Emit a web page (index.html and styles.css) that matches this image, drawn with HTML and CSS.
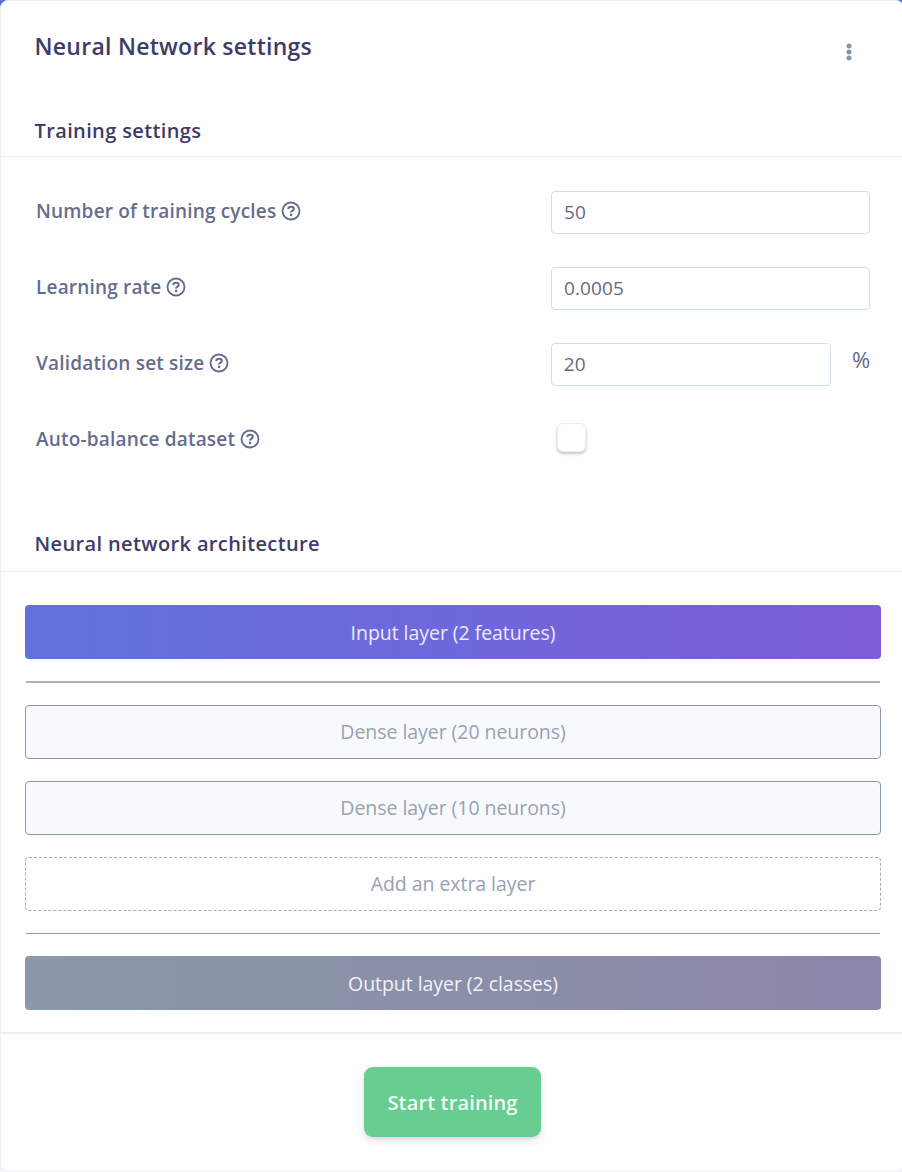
FILE: index.html
```html
<!DOCTYPE html>
<html lang="en">
<head>
<meta charset="utf-8">
<title>Neural Network settings</title>
<link rel="stylesheet" href="styles.css">
</head>
<body>
<svg class="defs" aria-hidden="true">
  <symbol id="help" viewBox="0 0 20 20">
    <circle cx="10" cy="10" r="8.5" fill="none" stroke="currentColor" stroke-width="1.8"/>
    <path d="M7.1 8C7.4 6.3 8.5 5.8 10 5.8C11.7 5.8 12.8 6.6 12.8 7.8C12.8 9.6 10.1 9.6 10.1 11.4" fill="none" stroke="currentColor" stroke-width="2.1"/>
    <circle cx="10.1" cy="13.9" r="1.3" fill="currentColor"/>
  </symbol>
</svg>
<main class="card">
  <header class="card-header">
    <h1 class="title">Neural Network settings</h1>
    <svg class="menu" viewBox="0 0 6 18"><circle cx="3" cy="3" r="2.5"/><circle cx="3" cy="9" r="2.5"/><circle cx="3" cy="15" r="2.5"/></svg>
  </header>
  <h2 class="section-title training">Training settings</h2>
  <section class="form">
    <div class="row"><label class="label"><span>Number of training cycles</span><svg class="help"><use href="#help"/></svg></label><div class="field">50</div></div>
    <div class="row"><label class="label"><span>Learning rate</span><svg class="help"><use href="#help"/></svg></label><div class="field">0.0005</div></div>
    <div class="row"><label class="label"><span>Validation set size</span><svg class="help"><use href="#help"/></svg></label><div class="field short">20</div><span class="unit">%</span></div>
    <div class="row"><label class="label"><span>Auto-balance dataset</span><svg class="help"><use href="#help"/></svg></label><div class="checkbox"></div></div>
  </section>
  <h2 class="section-title architecture">Neural network architecture</h2>
  <section class="layers">
    <div class="layer input"><span>Input layer (2 features)</span></div>
    <div class="rule soft"></div>
    <div class="layer dense"><span>Dense layer (20 neurons)</span></div>
    <div class="layer dense"><span>Dense layer (10 neurons)</span></div>
    <div class="layer extra"><span>Add an extra layer</span></div>
    <div class="rule"></div>
    <div class="layer output"><span>Output layer (2 classes)</span></div>
  </section>
  <footer class="footer"><button class="start">Start training</button></footer>
</main>
</body>
</html>
```
FILE: styles.css
```css
* { box-sizing: border-box; }
body { margin: 0; width: 902px; height: 1172px; overflow: hidden; background: linear-gradient(#5e6bdc 0, #5e6bdc 60px, #f3f3f8 160px); font-family: "Open Sans", sans-serif; }
.defs { position: absolute; width: 0; height: 0; }
.card { width: 904px; height: 1172px; background: #fefefe; border: 1px solid #efeff2; border-radius: 8px; }
.card-header { height: 96px; padding: 28px 51px 0 33.5px; display: flex; justify-content: space-between; }
.title { margin: 0; font-size: 23px; line-height: 34px; font-weight: 600; letter-spacing: .27px; color: #403c66; }
.menu { width: 6px; height: 18px; margin-top: 14px; fill: #8a94a6; }
.section-title { margin: 0; padding: 0 33.5px; height: 60px; line-height: 28px; font-size: 20px; font-weight: 600; letter-spacing: .37px; color: #403c66; border-bottom: 1px solid #eeeeef; }
.training { padding-top: 20px; }
.architecture { padding-top: 17px; height: 59px; }
.form { padding: 34px 32px 0 35px; height: 356px; }
.row { display: flex; height: 76px; align-items: flex-start; }
.label { width: 515px; display: flex; align-items: center; height: 40px; font-size: 19px; font-weight: 600; letter-spacing: .18px; color: #656d8e; }
.help { width: 20px; height: 20px; margin-left: 4.5px; }
.field { width: 319px; height: 42.5px; border: 1px solid #cbe0f0; border-radius: 4px; padding: 0 12px; line-height: 41px; font-size: 19px; letter-spacing: .1px; color: #666a85; }
.short { width: 280.5px; }
.unit { margin-left: 21px; line-height: 32px; font-size: 22px; color: #666a85; }
.checkbox { width: 29px; height: 29px; margin: 4px 0 0 6px; border-radius: 6px; background: #fff; border: 1px solid #ececf2; box-shadow: 0 2px 3px rgba(60, 60, 100, .3); }
.short + .unit { width: 19px; }
.layers { padding: 33px 20px 0 24px; height: 460px; }
.layer { width: 856px; height: 54px; margin-bottom: 22px; border-radius: 4px; display: flex; align-items: center; justify-content: center; font-size: 19.5px; letter-spacing: -.05px; }
.input { background: linear-gradient(90deg, #6072de, #7e5ddb); color: #eeeaff; }
.dense { background: #f7f9fc; border: 1px solid #8f99ae; color: #97a2b4; padding-bottom: 1px; }
.extra { border: 1px dashed #a8abb2; color: #97a2b4; padding-bottom: 1px; }
.output { background: linear-gradient(90deg, #8b98a9, #8a87a8); color: #f1f2f8; }
.rule { width: 854px; height: 1px; margin: 0 0 22px 1px; background: #8f99ae; }
.soft { height: 2px; background: #acb1bf; }
.footer { border-top: 2px solid #eeeeef; height: 138px; padding: 33px 0 0 1px; display: flex; justify-content: center; }
.start { font: 600 20px "Open Sans", sans-serif; letter-spacing: .15px; width: 177px; height: 70px; border: 0; border-radius: 9px; background: #67cd90; color: #effff5; box-shadow: 0 4px 7px rgba(50, 50, 93, .12), 0 1px 3px rgba(0, 0, 0, .08); padding: 0; }
```
